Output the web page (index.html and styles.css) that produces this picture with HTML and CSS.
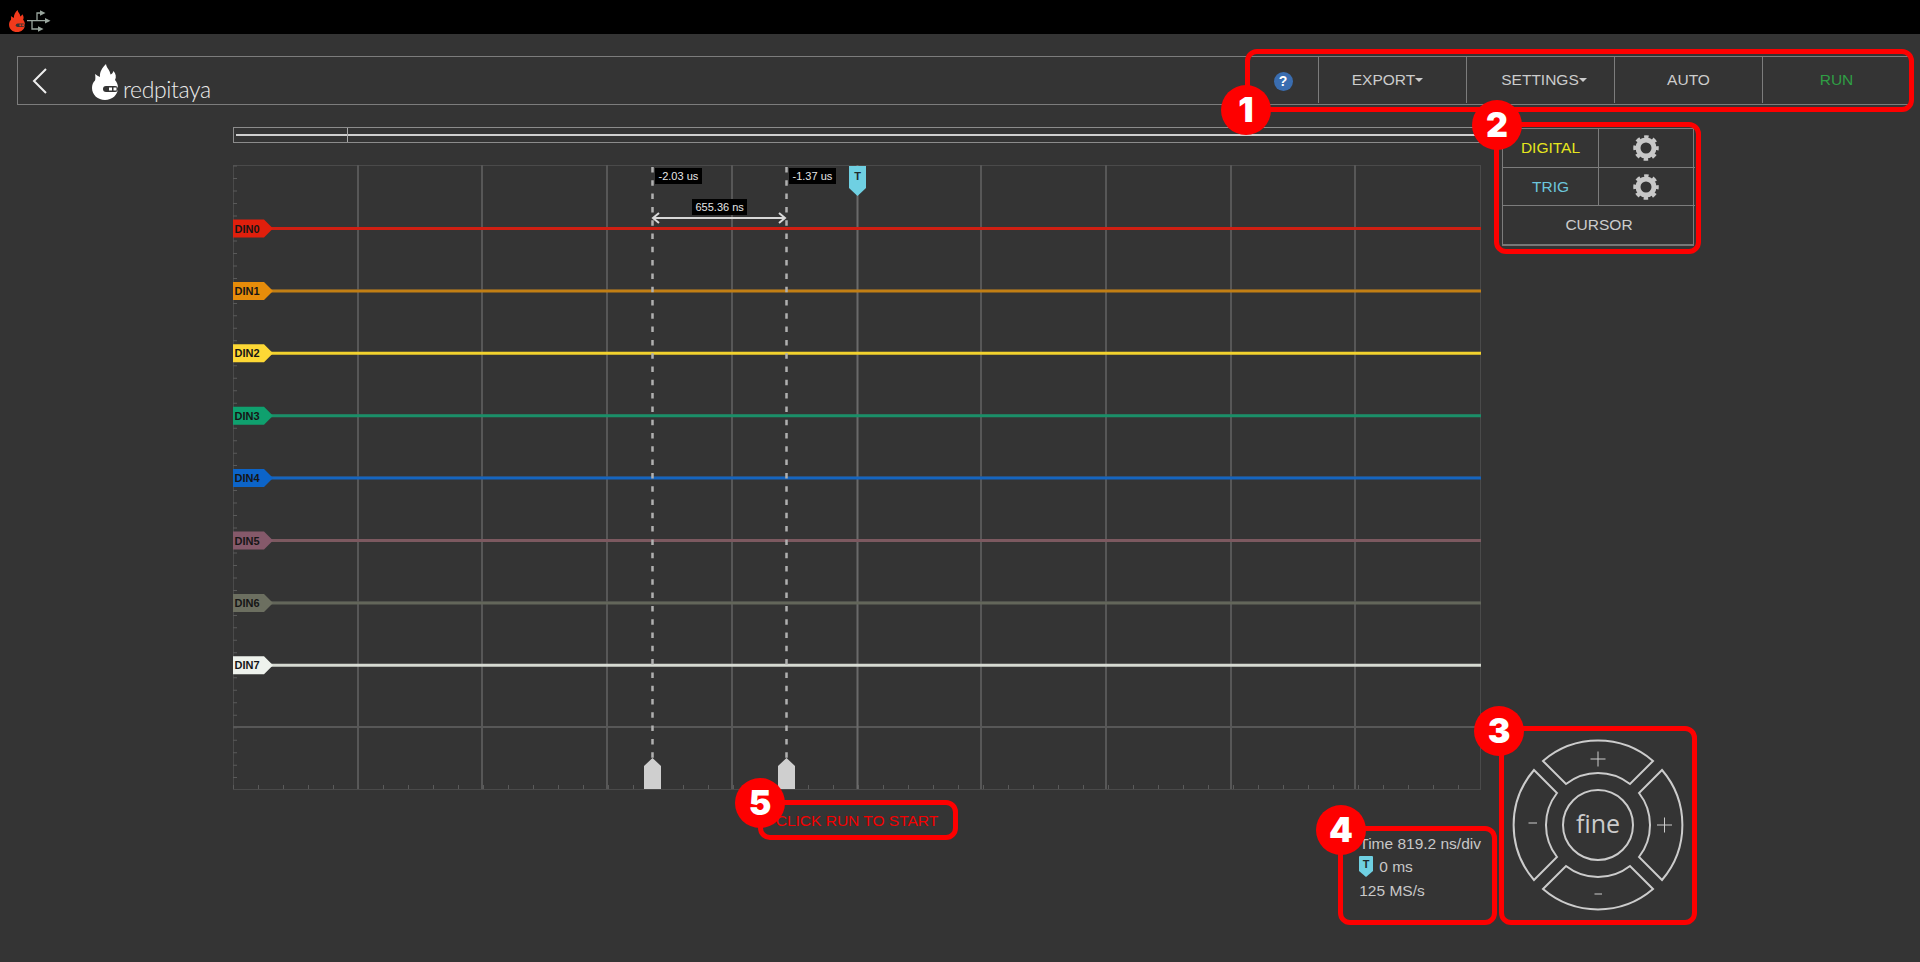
FILE: index.html
```html
<!DOCTYPE html>
<html lang="en">
<head>
  <meta charset="UTF-8" />
  <meta name="viewport" content="width=device-width, initial-scale=1.0" />
  <title>Logic Analyzer</title>
  <link rel="stylesheet" href="styles.css">
</head>
<body>
  <!-- Shared icons -->
  <svg class="defs" width="0" height="0">
    <symbol id="flame" viewBox="0 0 26 36">
      <path d="M14 0C14.5 4 18 6 18.5 10.5C20 10 21 8.5 21.5 7C24 10 24.5 13 23 16C25 18 26 21 26 24C26 31 20 36 13 36C6 36 0 31 0 24C0 21 1 18 3 16.5C3.5 15 3.5 12 3 10C5 11.5 7 12.5 8 13C7.5 8 10 4 14 0Z" fill="currentColor" />
      <rect x="11" y="22" width="15" height="6" rx="3" fill="#343434" />
      <rect x="17" y="23.5" width="3" height="3" fill="currentColor" />
      <rect x="21.5" y="23.5" width="3" height="3" fill="currentColor" />
    </symbol>
    <symbol id="gear" viewBox="-14 -14 28 28">
      <circle r="8" fill="none" stroke="currentColor" stroke-width="5" />
      <circle r="10.5" fill="none" stroke="currentColor" stroke-width="4.5" stroke-dasharray="4.2 4.05" stroke-dashoffset="2.1" />
    </symbol>
  </svg>

  <!-- Top strip -->
  <div class="topbar">
    <svg class="top-flame"><use href="#flame" /></svg>
    <svg class="top-usb" viewBox="0 0 24 23">
      <path d="M0 10.7H18M5 10.7V19H12M10 10.7V3H14" fill="none" stroke="currentColor" stroke-width="1.3" />
      <path d="M18 8L23.5 10.7L18 13.4ZM11 16.3L16.5 19L11 21.7ZM13 .3L18.5 3L13 5.7Z" fill="currentColor" />
    </svg>
  </div>

  <!-- Navbar -->
  <div class="nav">
    <svg class="nav-back" viewBox="0 0 15 26"><path d="M14 1L2 13L14 25" fill="none" stroke="currentColor" stroke-width="2" /></svg>
    <div class="logo">
      <svg class="logo-flame"><use href="#flame" /></svg>
      <span class="logo-text">redpitaya</span>
    </div>
    <div class="nav-menu">
      <div class="nav-help"><span class="help-icon">?</span></div>
      <div class="nav-item nav-export">EXPORT<span class="caret"></span></div>
      <div class="nav-item nav-settings">SETTINGS<span class="caret"></span></div>
      <div class="nav-item">AUTO</div>
      <div class="nav-item run">RUN</div>
    </div>
  </div>

  <div class="workspace">
    <div class="scope-column">
      <div class="slider"><span class="slider-mark"></span></div>

      <!-- Graph area -->
      <svg class="plot" viewBox="0 0 1248 625">
        <rect class="plot-frame" x="0.5" y="0.5" width="1247" height="624" />
        <path class="grid" d="M125 0V624M249 0V624M374 0V624M499 0V624M748 0V624M873 0V624M998 0V624M1122 0V624M0 562H1248" />
        <path class="grid-soft" d="M0 63H1248M0 125H1248M0 188H1248M0 250H1248M0 312H1248M0 375H1248M0 437H1248M0 500H1248" />
        <line class="ticks" x1="2" y1="0.6" x2="2" y2="624" />
        <line class="ticks" x1="0" y1="622" x2="1248" y2="622" />
        <line class="trigger-line" x1="624.5" y1="0" x2="624.5" y2="624" />

        <g class="din din0" transform="translate(0 63.5)"><line x1="30" x2="1248" /><polygon points="0,-9 31,-9 40,0 31,9 0,9" /><text x="1.5" y="4">DIN0</text></g>
        <g class="din din1" transform="translate(0 125.9)"><line x1="30" x2="1248" /><polygon points="0,-9 31,-9 40,0 31,9 0,9" /><text x="1.5" y="4">DIN1</text></g>
        <g class="din din2" transform="translate(0 188.3)"><line x1="30" x2="1248" /><polygon points="0,-9 31,-9 40,0 31,9 0,9" /><text x="1.5" y="4">DIN2</text></g>
        <g class="din din3" transform="translate(0 250.7)"><line x1="30" x2="1248" /><polygon points="0,-9 31,-9 40,0 31,9 0,9" /><text x="1.5" y="4">DIN3</text></g>
        <g class="din din4" transform="translate(0 313.1)"><line x1="30" x2="1248" /><polygon points="0,-9 31,-9 40,0 31,9 0,9" /><text x="1.5" y="4">DIN4</text></g>
        <g class="din din5" transform="translate(0 375.5)"><line x1="30" x2="1248" /><polygon points="0,-9 31,-9 40,0 31,9 0,9" /><text x="1.5" y="4">DIN5</text></g>
        <g class="din din6" transform="translate(0 437.9)"><line x1="30" x2="1248" /><polygon points="0,-9 31,-9 40,0 31,9 0,9" /><text x="1.5" y="4">DIN6</text></g>
        <g class="din din7" transform="translate(0 500.3)"><line x1="30" x2="1248" /><polygon points="0,-9 31,-9 40,0 31,9 0,9" /><text x="1.5" y="4">DIN7</text></g>

        <!-- Cursors -->
        <line class="cursor-line" x1="419.5" y1="2" x2="419.5" y2="593" />
        <line class="cursor-line" x1="553.5" y1="2" x2="553.5" y2="593" />
        <polygon class="cursor-handle" points="419.5,593 428,601 428,624 411,624 411,601" />
        <polygon class="cursor-handle" points="553.5,593 562,601 562,624 545,624 545,601" />
        <rect class="cursor-tag" x="422" y="3" width="47" height="16" />
        <text class="cursor-text" x="425.5" y="15">-2.03 us</text>
        <rect class="cursor-tag" x="556" y="3" width="47" height="16" />
        <text class="cursor-text" x="559.5" y="15">-1.37 us</text>
        <rect class="cursor-tag" x="459" y="34" width="55" height="16" />
        <text class="cursor-text" x="462.5" y="46">655.36 ns</text>
        <path class="cursor-arrow" d="M421 53H551M426 48L420 53L426 58M546 48L552 53L546 58" />

        <!-- Trigger marker -->
        <polygon class="trigger-mark" points="616,1 633,1 633,23 624.5,31 616,23" />
        <text class="trigger-text" x="624.5" y="15">T</text>
      </svg>

      <div class="scope-footer">
        <div class="start-msg">CLICK RUN TO START</div>
        <div class="info">
          <div>Time 819.2 ns/div</div>
          <div class="info-trig">
            <svg class="info-badge" viewBox="0 0 14 21">
              <path d="M0 1Q0 0 1 0H13Q14 0 14 1V15L7 21L0 15Z" fill="#6fd0e2" />
              <text class="info-badge-text" x="7" y="12">T</text>
            </svg>
            <span>0 ms</span>
          </div>
          <div>125 MS/s</div>
        </div>
      </div>
    </div>

    <div class="side-column">
      <div class="channels">
        <div class="channel-cell digital">DIGITAL</div>
        <div class="channel-cell"><svg class="gear"><use href="#gear" /></svg></div>
        <div class="channel-cell trig">TRIG</div>
        <div class="channel-cell"><svg class="gear"><use href="#gear" /></svg></div>
        <div class="channel-cell cursor-cell">CURSOR</div>
      </div>

      <svg class="joystick" viewBox="-88 -88 176 176">
        <defs>
          <path id="pad" d="M-55 -64A84.4 84.4 0 0 1 55 -64L32 -41A52 52 0 0 0 -32 -41Z" />
        </defs>
        <use class="pad" href="#pad" />
        <use class="pad" href="#pad" transform="rotate(90)" />
        <use class="pad" href="#pad" transform="rotate(180)" />
        <use class="pad" href="#pad" transform="rotate(270)" />
        <circle class="pad" r="35" />
        <text class="pad-fine" x="0" y="8">fine</text>
        <path class="pad-sign" d="M-7.5 -66H7.5M0 -73.5V-58.5M59 0H74M66.5 -7.5V7.5M-69.5 -2H-61M-3.5 69H4" />
      </svg>
    </div>
  </div>

  <!-- Numbered call-outs drawn over the screenshot -->
  <div class="callout callout-1"></div>
  <div class="callout callout-2"></div>
  <div class="callout callout-3"></div>
  <div class="callout callout-4"></div>
  <div class="callout callout-5"></div>
  <div class="badge badge-1">1</div>
  <div class="badge badge-2">2</div>
  <div class="badge badge-3">3</div>
  <div class="badge badge-4">4</div>
  <div class="badge badge-5">5</div>
</body>
</html>
```

FILE: styles.css
```css
html,
body {
  height: 100%;
}
body {
  font-family: "Liberation Sans", Arial, sans-serif;
  font-size: 15.5px;
  margin: 0;
  padding: 0;
  background-color: #343434;
  color: #cccccc;
  overflow: hidden;
  position: relative;
}
.defs {
  display: block;
  height: 0;
}

/* Top strip */
.topbar {
  background-color: #000;
  height: 34px;
  display: flex;
  align-items: center;
  padding-left: 9px;
  gap: 2px;
}
.top-flame {
  width: 16px;
  height: 22px;
  color: #f23a1c;
  margin-top: 8px;
}
.top-usb {
  width: 24px;
  height: 23px;
  color: #9aa69e;
  margin-top: 8px;
}

/* Navbar */
.nav {
  margin: 22px 10px 0 17px;
  height: 49px;
  box-sizing: border-box;
  border: 1px solid #7c7c7c;
  border-right: none;
  display: flex;
  align-items: stretch;
}
.nav-back {
  width: 15px;
  height: 26px;
  color: #eee;
  margin: 11px 0 0 14px;
}
.logo {
  display: flex;
  align-items: flex-start;
  margin-left: 45px;
  color: #fff;
}
.logo-flame {
  width: 26px;
  height: 36px;
  margin-top: 7px;
}
.logo-text {
  font-family: Lato, sans-serif;
  font-weight: 300;
  font-size: 23px;
  letter-spacing: -0.4px;
  line-height: 30px;
  margin: 17px 0 0 5px;
  color: #ececec;
}
.nav-menu {
  margin-left: auto;
  display: flex;
}
.nav-help {
  width: 70px;
  padding-top: 1px;
  display: flex;
  align-items: center;
  justify-content: center;
}
.help-icon {
  width: 19px;
  height: 19px;
  line-height: 19px;
  border-radius: 50%;
  background-color: #3a6db0;
  color: #fff;
  font-weight: bold;
  font-size: 14px;
  text-align: center;
}
.nav-item {
  width: 148px;
  box-sizing: border-box;
  border-left: 1px solid #7c7c7c;
  display: flex;
  align-items: center;
  justify-content: center;
  margin-bottom: 1px;
}
.nav-item.nav-export {
  padding-right: 10px;
}
.nav-item.nav-settings {
  padding-left: 7px;
}
.nav-item.run {
  color: #2f9e44;
}
.caret {
  border-top: 4px solid #cccccc;
  border-left: 4px solid transparent;
  border-right: 4px solid transparent;
}

/* Main area */
.workspace {
  display: flex;
  margin: 22px 0 0 233px;
}
.scope-column {
  width: 1248px;
}
.slider {
  height: 16px;
  box-sizing: border-box;
  border: 1px solid #8c8c8c;
  border-width: 1px 0 1px 1px;
  display: flex;
  align-items: center;
  padding-left: 2px;
  position: relative;
}
.slider::before {
  content: "";
  flex: 1;
  height: 2px;
  background-color: #cfcfcf;
}
.slider-mark {
  position: absolute;
  left: 113px;
  top: 0;
  bottom: 0;
  width: 1px;
  background-color: #aaa;
}

/* Graph */
.plot {
  display: block;
  width: 1248px;
  height: 625px;
  margin-top: 22px;
}
.plot-frame {
  fill: none;
  stroke: #4a4a4a;
}
.grid {
  fill: none;
  stroke: #575757;
  stroke-width: 2;
}
.grid-soft {
  fill: none;
  stroke: #484848;
}
.ticks {
  stroke: #5a5a5a;
  stroke-width: 4;
  stroke-dasharray: 1 11.48;
}
.ticks + .ticks {
  stroke-dasharray: 1 24;
}
.trigger-line {
  stroke: #6a6a6a;
  stroke-width: 2;
}
.din line {
  stroke-width: 3;
}
.din text {
  font-size: 11px;
  font-weight: bold;
  fill: #161616;
}
.din0 line { stroke: #cf1f12; }
.din0 polygon { fill: #e01f0c; }
.din1 line { stroke: #c27f14; }
.din1 polygon { fill: #e68c0a; }
.din2 line { stroke: #f2d22e; }
.din2 polygon { fill: #fdd835; }
.din3 line { stroke: #1a8f68; }
.din3 polygon { fill: #0fa06e; }
.din4 line { stroke: #1565c0; }
.din4 polygon { fill: #0c64c8; }
.din5 line { stroke: #7c5960; }
.din5 polygon { fill: #85596a; }
.din6 line { stroke: #63665a; }
.din6 polygon { fill: #6c6f60; }
.din7 line { stroke: #d6dad2; }
.din7 polygon { fill: #eef2ec; }

.cursor-line {
  stroke: #b0b0b0;
  stroke-width: 2.5;
  stroke-dasharray: 5.5 7.8;
}
.cursor-handle {
  fill: #cfcfcf;
}
.cursor-tag {
  fill: #000;
}
.cursor-text {
  font-size: 11px;
  fill: #e6e6e6;
}
.cursor-arrow {
  fill: none;
  stroke: #d8d8d8;
  stroke-width: 2;
}
.trigger-mark {
  fill: #6fd0e2;
}
.trigger-text {
  font-size: 11px;
  font-weight: bold;
  fill: #1f2a2e;
  text-anchor: middle;
}

/* Below the graph */
.scope-footer {
  display: grid;
  grid-template-columns: 1fr auto 1fr;
}
.start-msg {
  grid-column: 2;
  color: #f50000;
  padding-top: 22px;
  line-height: 18px;
  white-space: nowrap;
}
.info {
  grid-column: 3;
  justify-self: end;
  padding-top: 42px;
  line-height: 23.5px;
  white-space: nowrap;
  color: #c8c8c8;
}
.info-trig {
  display: flex;
  align-items: center;
  gap: 6px;
  margin: -1px 0 1px;
}
.info-badge {
  width: 14px;
  height: 21px;
}
.info-badge-text {
  font-size: 11px;
  font-weight: bold;
  fill: #1f2a2e;
  text-anchor: middle;
}

/* Right panel */
.side-column {
  width: 192px;
  margin-left: 21px;
  padding-top: 1px;
}
.channels {
  display: grid;
  grid-template-columns: 96px 96px;
  grid-auto-rows: 38.7px;
  border: 1px solid #7c7c7c;
  border-bottom: 2px solid #777;
  box-sizing: border-box;
  height: 118px;
}
.channel-cell {
  display: flex;
  align-items: center;
  justify-content: center;
  border-bottom: 1px solid #7c7c7c;
}
.channel-cell:nth-child(odd) {
  border-right: 1px solid #7c7c7c;
}
.channel-cell.digital {
  color: #e6e61e;
}
.channel-cell.trig {
  color: #6cc6dc;
}
.channel-cell.cursor-cell {
  grid-column: span 2;
  border: none;
  padding-bottom: 2px;
}
.gear {
  width: 28px;
  height: 28px;
  color: #c8c8c8;
  margin-right: 2px;
}
.joystick {
  display: block;
  width: 176px;
  height: 176px;
  margin: 491px 0 0 8px;
}
.pad {
  fill: none;
  stroke: #cccccc;
  stroke-width: 2;
}
.pad-fine {
  font-family: "Open Sans", sans-serif;
  font-size: 25px;
  fill: #cccccc;
  text-anchor: middle;
}
.pad-sign {
  fill: none;
  stroke: #cccccc;
  stroke-width: 1;
}

/* Call-outs */
.callout {
  position: absolute;
  box-sizing: border-box;
  border: 5px solid #fe0000;
  border-radius: 12px;
}
.callout-1 { left: 1245px; top: 49px; width: 669px; height: 63px; }
.callout-2 { left: 1494px; top: 122px; width: 207px; height: 132px; }
.callout-3 { left: 1499px; top: 726px; width: 198px; height: 199px; }
.callout-4 { left: 1338px; top: 826px; width: 159px; height: 99px; }
.callout-5 { left: 758px; top: 800px; width: 200px; height: 40px; }
.badge {
  position: absolute;
  width: 50px;
  height: 50px;
  line-height: 50px;
  border-radius: 50%;
  background-color: #fe0000;
  color: #fff;
  font-family: Inter, sans-serif;
  font-weight: 900;
  font-size: 34px;
  text-align: center;
}
.badge-1 { left: 1221px; top: 85px; }
.badge-2 { left: 1472px; top: 100px; }
.badge-3 { left: 1474px; top: 706px; }
.badge-4 { left: 1316px; top: 805px; }
.badge-5 { left: 735px; top: 778px; }
```
